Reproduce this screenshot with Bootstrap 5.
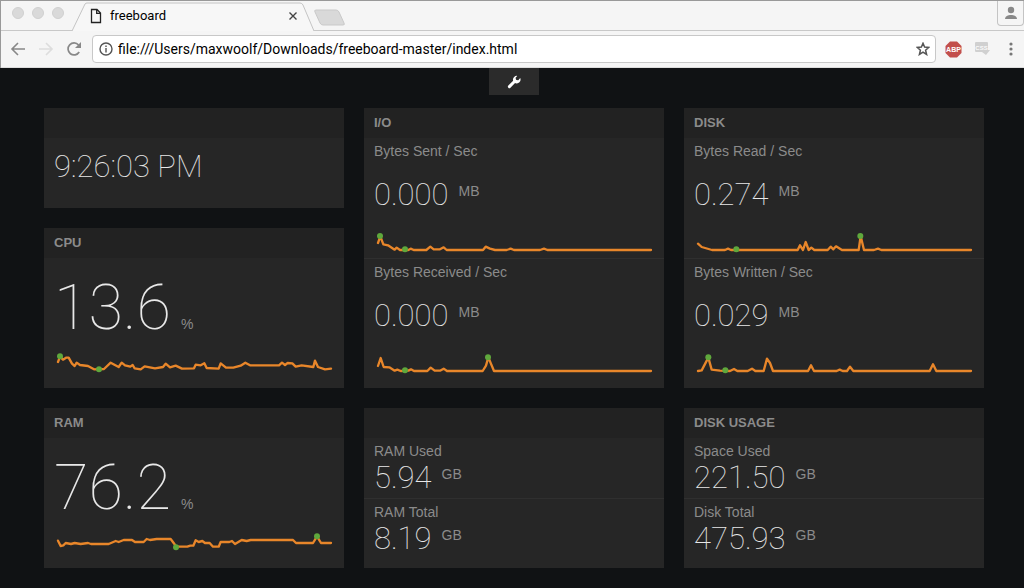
<!DOCTYPE html>
<html lang="en">
<head>
<meta charset="utf-8">
<meta name="viewport" content="width=device-width, initial-scale=1">
<title>freeboard</title>
<link href="https://cdn.jsdelivr.net/npm/bootstrap@5.3.0/dist/css/bootstrap.min.css" rel="stylesheet">
<style>
body{background:#101214;color:#8b8b8b;font:15px/20px "Liberation Sans",Arial,sans-serif}
svg{display:block;flex:none}
button{border:0;background:none;padding:0}
.chrome{background:#f5f5f5;color:#000;font-family:Roboto,sans-serif;border-left:1px solid #999}
.tabstrip{height:31px;border-top:1px solid #999;border-bottom:1px solid #c8c8c8;padding-left:11px}
.lights{gap:8px;margin-top:-6px}
.lights i{width:12px;height:12px;border-radius:50%;background:#d9d9d9;border:1px solid #d0d0d0}
.page-tab{position:relative;width:242px;height:30px;margin-left:8px;padding:0 16px 0 18px;font-size:13px}
.page-tab .tab-shape{position:absolute;left:0;top:0}
.page-tab>*:not(.tab-shape){position:relative}
.user-btn{width:27px;height:25px;border:1px solid #c4c4c4;border-top:0;border-radius:0 0 4px 4px}
.toolbar{height:37px;padding:0 8px 0 9px;border-bottom:1px solid #ddd}
.address{height:28px;border:1px solid #c8c8c8;border-radius:4px;background:#fff;padding:0 5px 0 6px;margin:0 5px 0 10px}
.address input{border:0;outline:0;padding:0;margin-left:5px;font:14px/20px Roboto,sans-serif;color:#000;background:none;min-width:0}
.wrench{width:50px;height:27px;background:#2b2b2b}
.board{max-width:940px;margin-top:13px;gap:20px;display:grid;grid-template-columns:repeat(3,minmax(0,1fr))}
.stack{display:flex;flex-direction:column;gap:20px}
.pane{background:#262626;display:flex;flex-direction:column}
.pane h2{background:#222;height:30px;margin:0;padding:0 10px;font-size:13px;font-weight:700;line-height:30px;color:#8b8b8b}
.widget{padding:3px 10px 2px}
.widget+.widget{border-top:1px solid #2f2f2f}
.compact{padding-bottom:5px}
.widget h3{margin:0;font-size:14px;font-weight:400;line-height:20px}
.thin{font-family:Roboto,sans-serif;font-weight:100;color:#e8e8e8}
.value{font-size:31px;line-height:30px}
.unit{font-size:14px;line-height:20px;margin-left:10px}
.reading{display:flex}
.traced .reading{margin:19px 0 16px}
.compact .reading{margin-top:2px}
.widget .unit{padding-top:1px}
.large{padding:20px 10px 10px}
.large .value{font-size:63px;line-height:60px}
.large .reading{margin-bottom:10px;align-items:baseline}
.clock{padding:14px 10px 26px}
.spark{width:100%;height:30px}
.spark polyline{fill:none;stroke:#e8862a;stroke-width:7;stroke-linejoin:round;stroke-linecap:round}
.spark circle{fill:#5fa83c}
</style>
</head>
<body>
<header class="chrome">
  <div class="tabstrip d-flex align-items-center">
    <div class="lights d-flex"><i></i><i></i><i></i></div>
    <div class="page-tab d-flex align-items-center">
      <svg class="tab-shape" width="242" height="30"><path d="M0 30 13 3Q14 2 15 2H228Q230 2 231 4L242 30" fill="#f7f7f7" stroke="#c4c4c4"/></svg>
      <svg width="12" height="16" viewBox="0 0 12 16" fill="none" stroke="#222" stroke-width="1.3"><path d="M1.5 1.5H7L10.5 5V14.5H1.5ZM6.7 1.8V5.3H10.2"/></svg>
      <span class="ms-2">freeboard</span>
      <button class="ms-auto" type="button" aria-label="Close tab"><svg width="10" height="10" stroke="#444" stroke-width="1.4"><path d="M1.5 1.5l7 7m0-7l-7 7"/></svg></button>
    </div>
    <button class="mt-1" type="button" aria-label="New tab"><svg width="34" height="18"><path d="M1 3Q0 1 2 1H22Q24 1 25 3L30 14Q31 16 29 16H9Q7 16 6 14Z" fill="#d9d9d9" stroke="#c9c9c9"/></svg></button>
    <button class="user-btn ms-auto align-self-start d-flex align-items-center justify-content-center" type="button" aria-label="Profile"><svg width="14" height="14" fill="#888"><circle cx="7" cy="4" r="3.2"/><path d="M1 13C1 7.5 13 7.5 13 13Z"/></svg></button>
  </div>
  <div class="toolbar d-flex align-items-center">
    <button type="button" aria-label="Back"><svg width="16" height="16" fill="none" stroke="#888" stroke-width="1.6"><path d="M15 8H2M8 2 2 8l6 6"/></svg></button>
    <button class="ms-2 ps-1" type="button" aria-label="Forward"><svg width="16" height="16" fill="none" stroke="#ddd" stroke-width="1.6"><path d="M1 8H14M8 2l6 6-6 6"/></svg></button>
    <button class="ms-2 ps-1" type="button" aria-label="Reload"><svg width="16" height="16" fill="none" stroke="#888" stroke-width="1.7"><path d="M13.2 11A6 6 0 1 1 12.6 4"/><path d="M15 1V7H9Z" fill="#888" stroke="none"/></svg></button>
    <div class="address d-flex align-items-center flex-grow-1">
      <svg width="14" height="14" fill="none" stroke="#555" stroke-width="1.4"><circle cx="7" cy="7" r="6"/><path d="M7 6v4.5M7 3.4v1.5"/></svg>
      <input class="flex-grow-1" type="text" aria-label="Address" value="file:///Users/maxwoolf/Downloads/freeboard-master/index.html">
      <button type="button" aria-label="Bookmark"><svg width="14" height="14" viewBox="0 0 14 14" fill="none" stroke="#555" stroke-width="1.5"><path d="M7 1.3 8.6 5.1 12.8 5.4 9.6 8.2 10.6 12.5 7 10.2 3.4 12.5 4.4 8.2 1.2 5.4 5.4 5.1Z"/></svg></button>
    </div>
    <button type="button" class="ms-1" aria-label="Adblock Plus"><svg width="17" height="17" viewBox="0 0 17 17"><path d="M5 .5H12L16.5 5V12L12 16.5H5L.5 12V5Z" fill="#c24f4c"/><text x="8.5" y="11.2" font-family="Liberation Sans, sans-serif" font-size="7" font-weight="700" fill="#fff" text-anchor="middle">ABP</text></svg></button>
    <button type="button" class="ms-2 ps-1" aria-label="CSS tool"><svg width="16" height="16" viewBox="0 0 16 16"><path d="M2 1H13Q14 1 14 2V9H16L12 14 8 11H2Q1 11 1 10V2Q1 1 2 1Z" fill="#d0d0d0"/><text x="7.5" y="8.5" font-family="Liberation Sans, sans-serif" font-size="6" font-weight="700" fill="#fafafa" text-anchor="middle">CSS</text></svg></button>
    <button type="button" class="ms-3" aria-label="Menu"><svg width="10" height="16" fill="#777"><circle cx="5" cy="3" r="1.6"/><circle cx="5" cy="8" r="1.6"/><circle cx="5" cy="13" r="1.6"/></svg></button>
  </div>
</header>
<main class="ps-1">
  <button class="wrench d-flex mx-auto align-items-center justify-content-center" type="button" aria-label="Settings"><svg width="14" height="14" viewBox="0 0 14 14"><path d="M2.4 11.6 8.2 5.8" stroke="#fff" stroke-width="3" stroke-linecap="round"/><path d="M13.2 3.1A3.8 3.8 0 1 1 10.2.9L8.6 2.7 9 5 11.3 5.3Z" fill="#fff"/></svg></button>
  <div class="board mx-auto">
    <div class="stack">
      <section class="pane" aria-label="Clock">
        <h2></h2>
        <div class="clock thin value">9:26:03 PM</div>
      </section>
      <section class="pane">
        <h2>CPU</h2>
        <div class="large">
          <div class="reading"><span class="thin value">13.6</span><span class="unit">%</span></div>
          <svg class="spark" viewBox="42 264 840 90"><polyline points="54,306 60,290 69,299 78,293 86,293 96,311 104,318 110,308 120,315 144,318 162,328 192,327 212,308 236,321 245,308 255,316 271,320 278,315 284,325 302,328 314,319 345,325 369,321 377,311 390,322 407,317 426,326 462,325 467,314 482,316 493,310 500,324 536,326 542,310 558,323 580,323 602,317 616,308 630,316 717,316 726,308 735,315 743,309 757,310 767,320 785,316 820,321 825,302 834,321 855,328 873,326"/><circle cx="60" cy="289" r="9"/><circle cx="177" cy="328" r="9"/></svg>
        </div>
      </section>
    </div>
    <section class="pane">
      <h2>I/O</h2>
      <div class="widget traced">
        <h3>Bytes Sent / Sec</h3>
        <div class="reading"><span class="thin value">0.000</span><span class="unit">MB</span></div>
        <svg class="spark" viewBox="42 378 840 90"><polyline points="54,429 61,409 70,433 84,436 104,449 110,443 120,450 145,450 152,446 161,450 199,450 211,440 221,448 240,448 251,442 260,450 369,450 377,440 390,446 405,450 440,450 452,446 462,450 540,450 552,446 562,450 873,450"/><circle cx="60" cy="408" r="9"/><circle cx="135" cy="448" r="9"/></svg>
      </div>
      <div class="widget traced">
        <h3>Bytes Received / Sec</h3>
        <div class="reading"><span class="thin value">0.000</span><span class="unit">MB</span></div>
        <svg class="spark" viewBox="42 276 840 90"><polyline points="54,333 62,309 71,336 88,337 104,347 112,344 122,348 145,347 153,343 162,348 202,348 212,338 224,347 240,347 251,341 261,348 368,348 378,332 385,307 402,348 873,348"/><circle cx="135" cy="346" r="9"/><circle cx="384" cy="307" r="9"/></svg>
      </div>
    </section>
    <section class="pane">
      <h2>DISK</h2>
      <div class="widget traced">
        <h3>Bytes Read / Sec</h3>
        <div class="reading"><span class="thin value">0.274</span><span class="unit">MB</span></div>
        <svg class="spark" viewBox="42 378 840 90"><polyline points="54,431 65,441 96,450 135,450 144,446 153,450 353,450 360,436 369,450 377,426 386,450 394,443 403,450 443,450 452,440 460,448 468,439 486,450 536,450 542,408 552,450 582,450 594,446 604,450 873,450"/><circle cx="169" cy="448" r="9"/><circle cx="541" cy="408" r="9"/></svg>
      </div>
      <div class="widget traced">
        <h3>Bytes Written / Sec</h3>
        <div class="reading"><span class="thin value">0.029</span><span class="unit">MB</span></div>
        <svg class="spark" viewBox="42 276 840 90"><polyline points="54,348 65,346 85,308 95,344 120,347 150,348 162,342 172,348 203,348 216,341 226,348 251,348 261,311 270,324 279,348 384,348 393,331 402,348 470,348 479,344 488,348 501,348 510,335 520,348 749,348 759,328 769,348 873,348"/><circle cx="85" cy="307" r="9"/><circle cx="136" cy="346" r="9"/></svg>
      </div>
    </section>
    <section class="pane">
      <h2>RAM</h2>
      <div class="large">
        <div class="reading"><span class="thin value">76.2</span><span class="unit">%</span></div>
        <svg class="spark" viewBox="42 384 840 90"><polyline points="54,422 62,438 70,436 77,429 93,432 104,429 122,432 144,429 153,432 206,432 227,423 236,426 251,420 276,420 285,426 311,426 320,417 330,420 350,417 392,417 401,429 409,440 442,440 451,437 460,437 467,421 476,426 487,423 495,429 509,429 519,440 536,440 542,426 568,426 576,423 585,432 605,420 620,423 632,420 759,420 768,429 819,429 831,409 843,429 873,429"/><circle cx="408" cy="442" r="9"/><circle cx="831" cy="409" r="9"/></svg>
      </div>
    </section>
    <section class="pane" aria-label="Memory">
      <h2></h2>
      <div class="widget compact">
        <h3>RAM Used</h3>
        <div class="reading"><span class="thin value">5.94</span><span class="unit">GB</span></div>
      </div>
      <div class="widget compact">
        <h3>RAM Total</h3>
        <div class="reading"><span class="thin value">8.19</span><span class="unit">GB</span></div>
      </div>
    </section>
    <section class="pane">
      <h2>DISK USAGE</h2>
      <div class="widget compact">
        <h3>Space Used</h3>
        <div class="reading"><span class="thin value">221.50</span><span class="unit">GB</span></div>
      </div>
      <div class="widget compact">
        <h3>Disk Total</h3>
        <div class="reading"><span class="thin value">475.93</span><span class="unit">GB</span></div>
      </div>
    </section>
  </div>
</main>
<script src="https://cdn.jsdelivr.net/npm/bootstrap@5.3.0/dist/js/bootstrap.bundle.min.js"></script>
</body>
</html>
